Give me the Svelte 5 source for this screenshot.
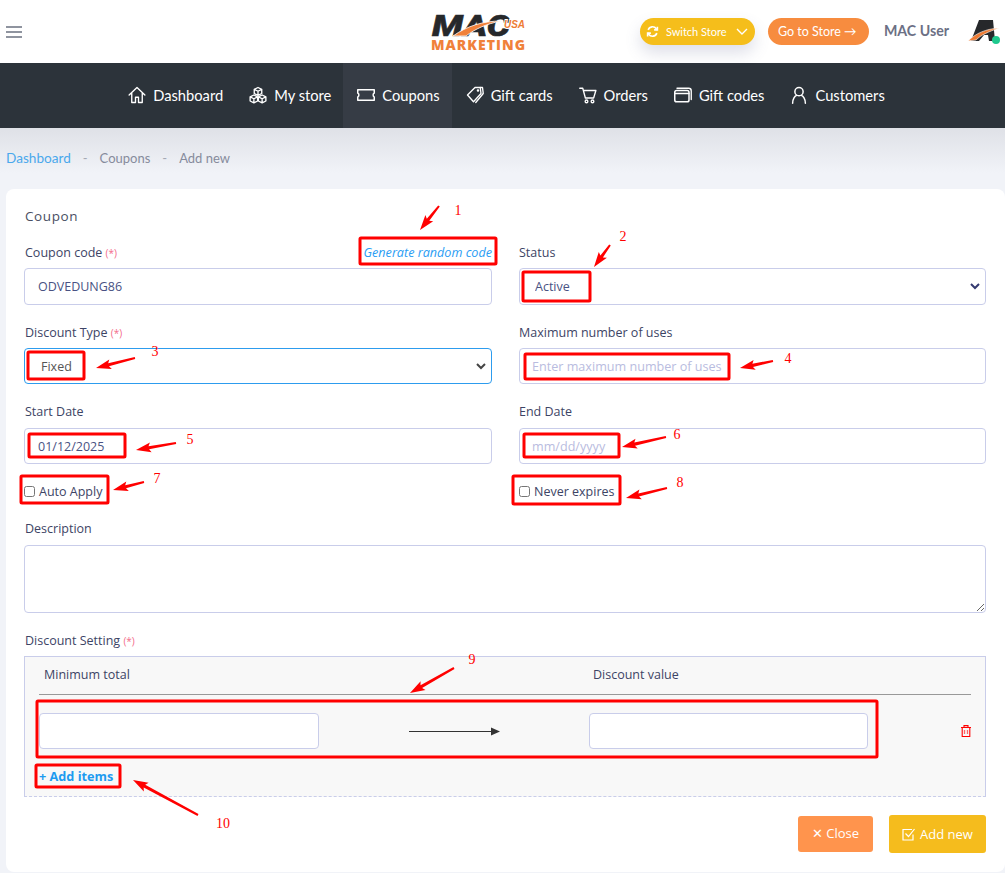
<script>
    const nav_items = [
        { label: 'Dashboard', icon: 'home' },
        { label: 'My store', icon: 'cubes' },
        { label: 'Coupons', icon: 'ticket', active: true },
        { label: 'Gift cards', icon: 'tag' },
        { label: 'Orders', icon: 'cart' },
        { label: 'Gift codes', icon: 'cards' },
        { label: 'Customers', icon: 'user' }
    ];

    const boxes = [
        [360, 238, 136, 26], [523, 272, 67, 29], [28, 352, 56, 27], [525, 354, 204, 25],
        [29, 434, 96, 23], [524, 434, 95, 23], [21, 476, 87, 27], [513, 476, 107, 28],
        [37, 701, 840, 56], [36, 765, 84, 22]
    ];

    const arrows = [
        [439, 206, 420, 230], [610, 245, 594, 267], [135, 358, 96, 368], [773, 361, 740, 368],
        [176, 443, 136, 450], [666, 437, 622, 447], [144, 482, 113, 490], [667, 488, 626, 498],
        [454, 668, 410, 693], [198, 815, 133, 780]
    ];

    const numbers = [
        ['1', 458, 215], ['2', 623, 241], ['3', 155, 356], ['4', 788, 363], ['5', 190, 444],
        ['6', 677, 439], ['7', 157, 483], ['8', 680, 487], ['9', 472, 664], ['10', 223, 828]
    ];

    // tapered shaft with a head at the tip
    function arrow_points([x1, y1, x2, y2]) {
        const len = Math.hypot(x2 - x1, y2 - y1);
        const ux = (x2 - x1) / len;
        const uy = (y2 - y1) / len;
        const nx = -uy;
        const ny = ux;
        const bx = x2 - ux * 13;
        const by = y2 - uy * 13;
        const pts = [
            [x1 + nx * 1, y1 + ny * 1],
            [bx + nx * 1.6, by + ny * 1.6],
            [bx - ux * 2 + nx * 5, by - uy * 2 + ny * 5],
            [x2, y2],
            [bx - ux * 2 - nx * 5, by - uy * 2 - ny * 5],
            [bx - nx * 1.6, by - ny * 1.6],
            [x1 - nx * 1, y1 - ny * 1]
        ];
        return pts.map((p) => p[0].toFixed(1) + ',' + p[1].toFixed(1)).join(' ');
    }
</script>

<div class="page">
    <header class="topbar">
        <svg class="burger" width="16" height="12" viewBox="0 0 16 12">
            <path d="M0 1h16M0 6h16M0 11h16" stroke="#6b7280" stroke-width="1.5" />
        </svg>

        <svg class="logo" width="96" height="48" viewBox="0 0 96 48">
            <text x="1" y="29" class="logo-mac" textLength="78" lengthAdjust="spacingAndGlyphs">MAC</text>
            <path d="M22 29C36 19 52 14 70 14 55 17 44 22 35 29Z" fill="#f0813a" stroke="#fff" stroke-width="0.8" />
            <text x="73" y="21" class="logo-usa" textLength="21" lengthAdjust="spacingAndGlyphs">USA</text>
            <text x="0" y="43" class="logo-marketing" textLength="94" lengthAdjust="spacing">MARKETING</text>
        </svg>

        <div class="top-right">
            <button class="pill switch">
                <svg width="13" height="13" viewBox="0 0 24 24" fill="none" stroke="#fff" stroke-width="3">
                    <path d="M4 9a8.500 8.500 0 0 1 15-2l2 2M20 15a8.500 8.500 0 0 1-15 2l-2-2" />
                    <path d="M21 3v6h-6M3 21v-6h6" />
                </svg>
                <span>Switch Store</span>
                <svg class="chev" width="12" height="7" viewBox="0 0 12 7" fill="none" stroke="#fff" stroke-width="1.400">
                    <path d="M1 1l5 5 5-5" />
                </svg>
            </button>
            <button class="pill goto">Go to Store →</button>
            <span class="username">MAC User</span>
            <div class="avatar">
                <svg width="32" height="24" viewBox="0 0 32 24">
                    <path d="M11 0h14l2 21h-6l-1-6h-4l-5 6H3Z" fill="#26282b" />
                    <path d="M0 21C8 13 18 9 31 8 20 12 13 15 8 20Z" fill="#ee7b33" stroke="#fff" stroke-width="0.600" />
                </svg>
                <span class="online"></span>
            </div>
        </div>
    </header>

    <nav class="mainnav">
        {#each nav_items as item}
            <div class="navitem" class:active={item.active}>
                <svg width="18" height="18" viewBox="0 0 24 24" fill="none" stroke="#fff" stroke-width="1.800" stroke-linejoin="round" stroke-linecap="round">
                    {#if item.icon === 'home'}
                        <path d="M1.500 12 12 2l10.500 10M5 9.500V22h5v-7h4v7h5V9.500" />
                    {:else if item.icon === 'cubes'}
                        <path d="M12 2l5 2.500v5.500l-5 2.500-5-2.500V4.500ZM7 4.500l5 2.500 5-2.500M12 7v5.500" />
                        <path d="M6.500 12l5 2.500v5.500l-5 2.500-5-2.500v-5.500ZM1.500 14.500l5 2.500 5-2.500M6.500 17v5.500" />
                        <path d="M17.500 12l5 2.500v5.500l-5 2.500-5-2.500v-5.500ZM12.500 14.500l5 2.500 5-2.500M17.500 17v5.500" />
                    {:else if item.icon === 'ticket'}
                        <path d="M1 5h22v4.500c-2 .5-2 4.500 0 5V19H1v-4.500c2-.5 2-4.500 0-5Z" stroke-width="2" />
                    {:else if item.icon === 'tag'}
                        <path d="M2 12 12 2h7l1 8-10 11Z" />
                        <path d="M19 2h3l1 8-10 12" />
                        <circle cx="16" cy="6" r="0.800" />
                    {:else if item.icon === 'cart'}
                        <path d="M1 3h4l3.500 13h11L22.500 6H6" />
                        <circle cx="10" cy="20.500" r="1.800" />
                        <circle cx="18" cy="20.500" r="1.800" />
                    {:else if item.icon === 'cards'}
                        <rect x="1" y="6" width="19" height="15" rx="2.500" stroke-width="2" />
                        <path d="M4 3h15.500A3.500 3.500 0 0 1 23 6.500V18M1 10h19" />
                    {:else}
                        <circle cx="12" cy="7.500" r="5.500" stroke-width="2" />
                        <path d="M3.500 23c0-6 3-10 5.500-10.500M20.500 23c0-6-3-10-5.500-10.500" stroke-width="2" />
                    {/if}
                </svg>
                <span>{item.label}</span>
            </div>
        {/each}
    </nav>

    <div class="crumbs">
        <span class="crumb-link">Dashboard</span>
        <span class="sep">-</span>
        <span>Coupons</span>
        <span class="sep">-</span>
        <span>Add new</span>
    </div>

    <main class="card">
        <h2>Coupon</h2>

        <div class="grid">
            <div class="field">
                <div class="label-row">
                    <label for="code">Coupon code <em>(*)</em></label>
                    <span class="gen-link">Generate random code</span>
                </div>
                <input id="code" class="tall" type="text" value="ODVEDUNG86" />
            </div>
            <div class="field">
                <div class="label-row"><label for="status">Status</label></div>
                <select id="status" class="tall navy">
                    <option>Active</option>
                </select>
            </div>

            <div class="field">
                <div class="label-row"><label for="type">Discount Type <em>(*)</em></label></div>
                <select id="type" class="focused">
                    <option>Fixed</option>
                </select>
            </div>
            <div class="field">
                <div class="label-row"><label for="max">Maximum number of uses</label></div>
                <input id="max" class="hint" type="text" placeholder="Enter maximum number of uses" />
            </div>

            <div class="field">
                <div class="label-row wide"><label for="start">Start Date</label></div>
                <input id="start" class="plain-dark" type="text" value="01/12/2025" />
            </div>
            <div class="field">
                <div class="label-row wide"><label for="end">End Date</label></div>
                <input id="end" class="hint" type="text" placeholder="mm/dd/yyyy" />
            </div>

            <label class="check"><input type="checkbox" /> Auto Apply</label>
            <label class="check"><input type="checkbox" /> Never expires</label>
        </div>

        <div class="field desc">
            <div class="label-row wide"><label for="desc">Description</label></div>
            <textarea id="desc"></textarea>
        </div>

        <div class="field setting">
            <div class="label-row"><span class="lbl">Discount Setting <em>(*)</em></span></div>
            <div class="setting-box">
                <div class="rule-row head">
                    <span class="min-head">Minimum total</span>
                    <span></span>
                    <span class="val-head">Discount value</span>
                    <span></span>
                </div>
                <div class="rule-row inputs">
                    <input type="text" aria-label="Minimum total" />
                    <svg class="arrow-icon" width="91" height="9" viewBox="0 0 91 9">
                        <path d="M0 4.500h82" stroke="#333" stroke-width="1" />
                        <path d="M82 0.500l9 4-9 4Z" fill="#333" />
                    </svg>
                    <input type="text" aria-label="Discount value" />
                    <svg class="trash" width="10" height="12" viewBox="0 0 10 12" fill="none" stroke="#f00" stroke-width="1.100">
                        <path d="M0 2.500h10M3 2.500V.600h4v1.900M1.200 2.500v9h7.600v-9" />
                        <path d="M3.500 5v4M6.500 5v4" stroke="#f66" stroke-width="1.300" />
                    </svg>
                </div>
                <div class="add-items">+ Add items</div>
            </div>
        </div>

        <div class="actions">
            <button class="btn close">✕ Close</button>
            <button class="btn add">
                <svg width="13" height="13" viewBox="0 0 13 13" fill="none" stroke="#fff" stroke-width="1.200">
                    <path d="M11 6.500V12H1V1.500h9" />
                    <path d="M3.500 5.500l3 3L12.500 1" />
                </svg>
                Add new
            </button>
        </div>
    </main>

    <!-- red review marks drawn over the form -->
    <svg class="marks" width="1005" height="873" viewBox="0 0 1005 873">
        {#each boxes as [x, y, w, h]}
            <rect {x} {y} width={w} height={h} rx="1" fill="none" stroke="#f00" stroke-width="3" />
        {/each}
        {#each arrows as a}
            <polygon points={arrow_points(a)} fill="#f00" />
        {/each}
        {#each numbers as [n, x, y]}
            <text {x} {y} class="mark-num" text-anchor="middle">{n}</text>
        {/each}
    </svg>
</div>

<style>
    :global(body) {
        margin: 0;
        background: #f1f3f8;
    }

    .page {
        position: relative;
        width: 1005px;
        height: 873px;
        overflow: hidden;
        font-family: "Open Sans", "Noto Sans", sans-serif;
        font-size: 12.5px;
        color: #3d4465;
        background: #f1f3f8;
    }

    .topbar {
        height: 63px;
        background: white;
        display: flex;
        align-items: center;
        padding: 0 5px 0 6px;
        box-sizing: border-box;
    }

    .burger {
        flex: none;
    }

    .logo {
        flex: none;
        margin-left: 409px;
        margin-top: -1px;
    }

    .logo-mac {
        font-family: "Roboto", "Liberation Sans", sans-serif;
        font-weight: 900;
        font-style: italic;
        font-size: 29px;
        fill: #26282b;
        stroke: #26282b;
        stroke-width: 0.5px;
    }

    .logo-usa {
        font-family: "Liberation Sans", sans-serif;
        font-weight: 700;
        font-style: italic;
        font-size: 11px;
        fill: #ee7b33;
        stroke: #fff;
        stroke-width: 2px;
        paint-order: stroke;
    }

    .logo-marketing {
        font-family: "Open Sans", sans-serif;
        font-weight: 800;
        font-size: 14px;
        fill: #f0813a;
    }

    .top-right {
        margin-left: auto;
        display: flex;
        align-items: center;
    }

    .pill {
        all: unset;
        box-sizing: border-box;
        height: 27px;
        border-radius: 14px;
        color: white;
        font-family: "Lato", sans-serif;
        display: flex;
        align-items: center;
    }

    .switch {
        width: 115px;
        background: #f5be1b;
        font-size: 11px;
        padding-left: 6px;
        gap: 7px;
        box-shadow: 0 8px 16px rgba(90, 95, 140, 0.2);
    }

    .chev {
        margin-left: 2px;
    }

    .goto {
        width: 101px;
        margin-left: 13px;
        background: #f78c3f;
        font-size: 12.5px;
        padding-left: 10px;
    }

    .username {
        margin-left: 15px;
        font-family: "Lato", sans-serif;
        font-weight: 700;
        font-size: 14.2px;
        color: #6c7085;
        margin-top: -2px;
    }

    .avatar {
        position: relative;
        margin-left: 19px;
        width: 32px;
        height: 24px;
        margin-top: 1px;
    }

    .online {
        position: absolute;
        right: 0;
        bottom: 0;
        width: 8px;
        height: 8px;
        border-radius: 50%;
        background: #1fc98e;
    }

    .mainnav {
        height: 65px;
        box-sizing: border-box;
        background: #2c333a;
        display: flex;
        justify-content: center;
        padding-left: 6px;
    }

    .navitem {
        display: flex;
        align-items: center;
        gap: 7px;
        padding: 0 12px 2px 14px;
        color: white;
        font-family: "Lato", sans-serif;
        font-size: 14.7px;
    }

    .navitem.active {
        background: #363c45;
    }

    .crumbs {
        height: 61px;
        box-sizing: border-box;
        padding: 21px 0 0 6px;
        display: flex;
        gap: 12px;
        font-family: "Lato", sans-serif;
        font-size: 13px;
        line-height: 19px;
        color: #868b9c;
        background: linear-gradient(#dfe1e7, #f1f3f8 45px);
    }

    .crumb-link {
        color: #4aa8ec;
        font-size: 13.6px;
    }

    .sep {
        color: #a5a9b5;
    }

    .card {
        margin-left: 6px;
        height: 683px;
        box-sizing: border-box;
        padding: 17px 19px 0 18px;
        background: white;
        border-radius: 8px;
    }

    h2 {
        margin: 0 0 16px;
        padding-left: 1px;
        font-size: 13.5px;
        line-height: 20px;
        font-weight: 400;
        letter-spacing: 0.6px;
        color: #4a4f63;
    }

    .grid {
        display: grid;
        grid-template-columns: 468px 467px;
        column-gap: 27px;
        row-gap: 17px;
    }

    .label-row {
        display: flex;
        justify-content: space-between;
        box-sizing: border-box;
        height: 20px;
        padding: 1px 0 0 1px;
        line-height: 20px;
        margin-bottom: 6px;
    }

    .grid > .field:nth-child(even) .label-row {
        padding-left: 0;
    }

    .label-row.wide {
        margin-bottom: 7px;
    }

    em {
        font-style: normal;
        font-size: 10px;
        color: #f36b8a;
    }

    .gen-link {
        font-style: italic;
        font-size: 12.6px;
        color: #2a9df4;
    }

    input[type="text"],
    select,
    textarea {
        display: block;
        width: 100%;
        height: 36px;
        box-sizing: border-box;
        padding: 0 13px;
        border: 1px solid #c9cdea;
        border-radius: 4px;
        background-color: white;
        font-family: inherit;
        font-size: 12.5px;
        color: #495283;
        outline: none;
    }

    input.tall,
    select.tall {
        height: 37px;
    }

    input.hint {
        padding-left: 12px;
    }

    input::placeholder {
        color: #b9bce0;
        opacity: 1;
        font-size: 12.6px;
    }

    select {
        appearance: none;
        padding-left: 15px;
        background-repeat: no-repeat;
        background-position: right 5px center;
        background-size: 10px 7px;
        background-image: url("data:image/svg+xml,%3Csvg xmlns='http://www.w3.org/2000/svg' viewBox='0 0 10 7'%3E%3Cpath d='M1 1l4 4 4-4' fill='none' stroke='%23444' stroke-width='2'/%3E%3C/svg%3E");
    }

    select.navy {
        background-image: url("data:image/svg+xml,%3Csvg xmlns='http://www.w3.org/2000/svg' viewBox='0 0 10 7'%3E%3Cpath d='M1 1l4 4 4-4' fill='none' stroke='%23343a70' stroke-width='2'/%3E%3C/svg%3E");
    }

    select.focused {
        border-color: #2d9cee;
        color: #555;
        padding-left: 16px;
    }

    .plain-dark {
        color: #3d4465;
    }

    .check {
        display: flex;
        align-items: center;
        height: 20px;
        gap: 4px;
        color: #3d4465;
    }

    .check input {
        margin: 0;
        width: 11px;
        height: 11px;
    }

    .desc {
        margin-top: 17px;
    }

    textarea {
        height: 68px;
        resize: vertical;
    }

    .setting {
        margin-top: 17px;
    }

    .setting-box {
        height: 141px;
        box-sizing: border-box;
        padding: 0 14px;
        background: #f8f8f8;
        border: 1px solid #c9cdea;
        border-bottom-style: dashed;
    }

    .rule-row {
        display: grid;
        grid-template-columns: 280px 270px 279px 1fr;
        align-items: center;
    }

    .head {
        height: 38px;
        padding-bottom: 3px;
        box-sizing: border-box;
        border-bottom: 1px solid #999;
    }

    .min-head {
        padding-left: 5px;
    }

    .val-head {
        padding-left: 4px;
    }

    .inputs {
        margin-top: 18px;
    }

    .inputs input {
        padding: 0 10px;
    }

    .arrow-icon {
        justify-self: center;
    }

    .trash {
        justify-self: end;
    }

    .add-items {
        margin-top: 17px;
        font-weight: 700;
        font-size: 12.7px;
        line-height: 20px;
        color: #1e9bf0;
    }

    .actions {
        margin-top: 18px;
        display: flex;
        justify-content: flex-end;
        align-items: center;
        gap: 16px;
    }

    .btn {
        all: unset;
        box-sizing: border-box;
        display: flex;
        align-items: center;
        justify-content: center;
        gap: 5px;
        color: white;
        font-family: "Open Sans", sans-serif;
        font-size: 13px;
        border-radius: 3px;
    }

    .close {
        width: 75px;
        height: 36px;
        padding-bottom: 2px;
        background: #ff944d;
    }

    .add {
        width: 97px;
        height: 38px;
        background: #f5bc1d;
    }

    .marks {
        position: absolute;
        top: 0;
        left: 0;
        pointer-events: none;
    }

    .mark-num {
        font-family: "Liberation Serif", serif;
        font-size: 14px;
        fill: #f00;
    }
</style>
